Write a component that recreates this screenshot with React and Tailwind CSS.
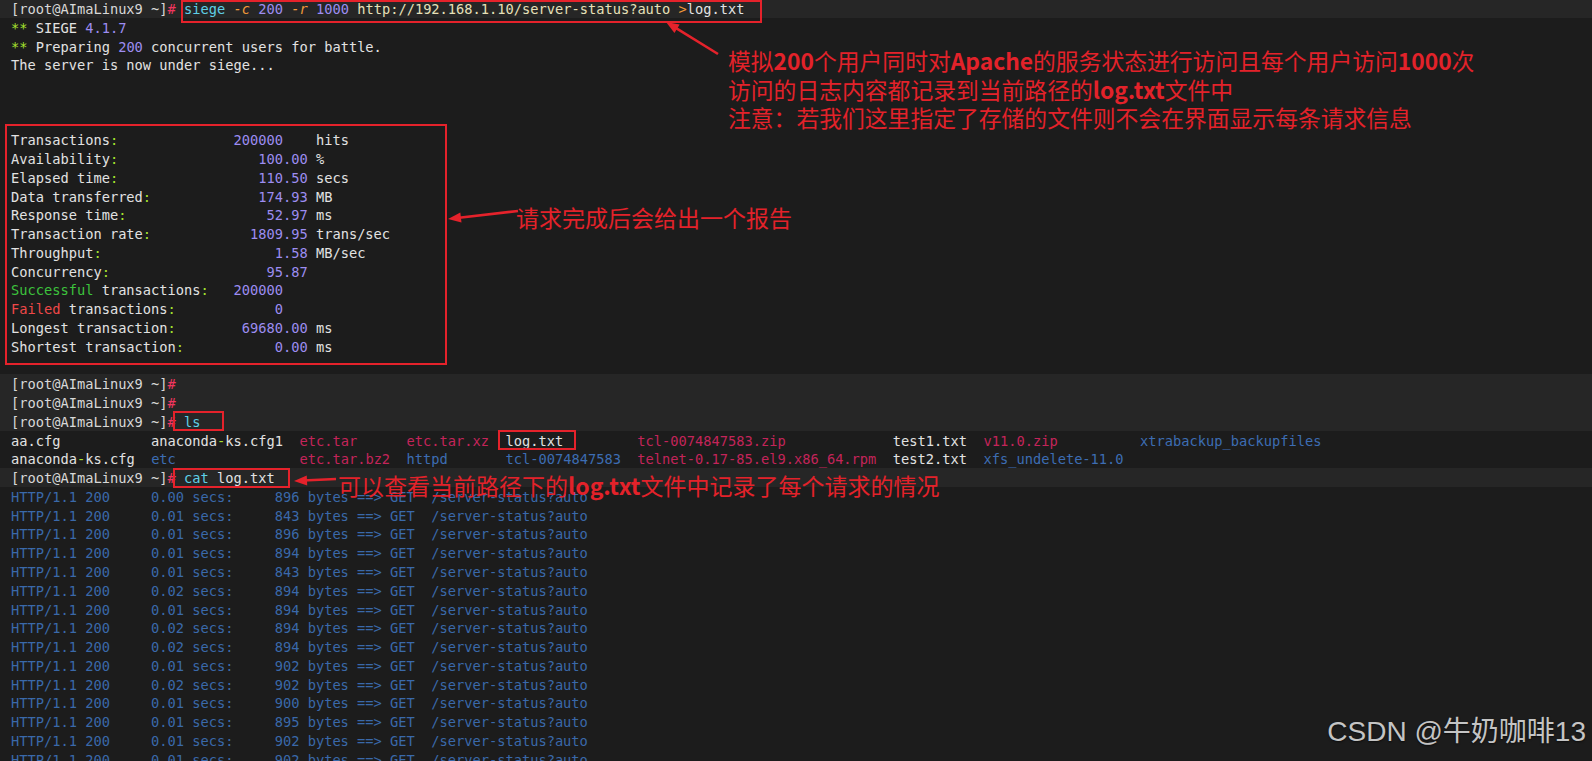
import clsx from 'clsx'

const W = 'text-[#e2e2e2]'
const GRN = 'text-[#a6e22e]'
const PUR = 'text-[#9d8df1]'
const CYN = 'text-[#5fcfe6]'
const ORG = 'text-[#f29a3a] italic'
const STR = 'text-[#e6e0b8]'
const PNK = 'text-[#f0365f]'
const ARC = 'text-[#c4245a]'
const BLU = 'text-[#3d6db3]'
const LOG = 'text-[#3a69aa]'
const OK = 'text-[#3cc23c]'
const BAD = 'text-[#ee4848]'

const s = (text, cls = W) => ({ text, cls })
const prompt = [s('[root@AImaLinux9 ~]', 'text-[#d8d8d8]'), s('#', PNK)]

function stat(parts, value, col, unit, gap = ' ') {
  const len = parts.reduce((n, p) => n + p.text.length, 0) + 1
  const segs = [...parts, s(':', GRN), s(' '.repeat(col - len)), s(value, PUR)]
  if (unit) segs.push(s(gap + unit))
  return segs
}

const lsWidths = [17, 18, 13, 12, 16, 31, 11, 19]
function lsRow(cells) {
  return cells.flatMap((cell, i) => {
    const len = cell.reduce((n, p) => n + p.text.length, 0)
    return i < cells.length - 1 ? [...cell, s(' '.repeat(lsWidths[i] - len))] : cell
  })
}

const hits = [
  ['0.00', '896'], ['0.01', '843'], ['0.01', '896'], ['0.01', '894'], ['0.01', '843'],
  ['0.02', '894'], ['0.01', '894'], ['0.02', '894'], ['0.02', '894'], ['0.01', '902'],
  ['0.02', '902'], ['0.01', '900'], ['0.01', '895'], ['0.01', '902'], ['0.01', '902'],
]

const lines = [
  {
    band: true,
    segs: [
      ...prompt, s(' '), s('siege', CYN), s(' '), s('-c', ORG), s(' '), s('200', PUR), s(' '),
      s('-r', ORG), s(' '), s('1000', PUR), s(' '), s('http://192.168.1.10/server-status?auto', STR),
      s(' '), s('>', 'text-[#f29a3a]'), s('log.txt'),
    ],
  },
  { segs: [s('**', GRN), s(' SIEGE '), s('4.1.7', PUR)] },
  { segs: [s('**', GRN), s(' Preparing '), s('200', PUR), s(' concurrent users for battle.')] },
  { segs: [s('The server is now under siege...')] },
  { segs: [] },
  { segs: [] },
  { segs: [] },
  { segs: stat([s('Transactions')], '200000', 27, 'hits', '    ') },
  { segs: stat([s('Availability')], '100.00', 30, '%') },
  { segs: stat([s('Elapsed time')], '110.50', 30, 'secs') },
  { segs: stat([s('Data transferred')], '174.93', 30, 'MB') },
  { segs: stat([s('Response time')], '52.97', 31, 'ms') },
  { segs: stat([s('Transaction rate')], '1809.95', 29, 'trans/sec') },
  { segs: stat([s('Throughput')], '1.58', 32, 'MB/sec') },
  { segs: stat([s('Concurrency')], '95.87', 31) },
  { segs: stat([s('Successful', OK), s(' transactions')], '200000', 27) },
  { segs: stat([s('Failed', BAD), s(' transactions')], '0', 32) },
  { segs: stat([s('Longest transaction')], '69680.00', 28, 'ms') },
  { segs: stat([s('Shortest transaction')], '0.00', 32, 'ms') },
  { segs: [] },
  { band: true, segs: prompt },
  { band: true, segs: prompt },
  { band: true, segs: [...prompt, s(' '), s('ls', CYN)] },
  {
    segs: lsRow([
      [s('aa.cfg')],
      [s('anaconda'), s('-', GRN), s('ks.cfg1')],
      [s('etc.tar', ARC)],
      [s('etc.tar.xz', ARC)],
      [s('log.txt')],
      [s('tcl-0074847583.zip', ARC)],
      [s('test1.txt')],
      [s('v11.0.zip', ARC)],
      [s('xtrabackup_backupfiles', BLU)],
    ]),
  },
  {
    segs: lsRow([
      [s('anaconda'), s('-', GRN), s('ks.cfg')],
      [s('etc', BLU)],
      [s('etc.tar.bz2', ARC)],
      [s('httpd', BLU)],
      [s('tcl-0074847583', BLU)],
      [s('telnet-0.17-85.el9.x86_64.rpm', ARC)],
      [s('test2.txt')],
      [s('xfs_undelete-11.0', BLU)],
    ]),
  },
  { band: true, segs: [...prompt, s(' '), s('cat', CYN), s(' log.txt')] },
  ...hits.map(([t, b]) => ({
    segs: [s(`HTTP/1.1 200     ${t} secs:     ${b} bytes ==> GET  /server-status?auto`, LOG)],
  })),
]

function Box({ className }) {
  return <div className={clsx('pointer-events-none absolute border-2 border-[#e5222b]', className)} />
}

function Arrow({ from, to }) {
  const dx = to[0] - from[0]
  const dy = to[1] - from[1]
  const len = Math.hypot(dx, dy)
  const ux = dx / len
  const uy = dy / len
  const bx = to[0] - ux * 13
  const by = to[1] - uy * 13
  const px = -uy * 5
  const py = ux * 5
  const head = `${to[0]},${to[1]} ${bx + px},${by + py} ${bx - px},${by - py}`
  return (
    <g>
      <line x1={from[0]} y1={from[1]} x2={bx + ux * 4} y2={by + uy * 4} stroke="#e5222b" strokeWidth="2.6" />
      <polygon points={head} fill="#e5222b" />
    </g>
  )
}

export default function App() {
  return (
    <div className="relative h-[761px] w-[1592px] overflow-hidden bg-[#1c1c1c] font-['DejaVu_Sans_Mono',monospace] text-[13.7px]">
      <div className="mt-[-1px] flex flex-col">
        {lines.map((line, i) => (
          <div
            key={i}
            className={clsx(
              'h-[18.78px] shrink-0 whitespace-pre pl-[11px] pt-[1px] leading-[18.78px]',
              line.band && 'bg-[#262626]',
            )}
          >
            {line.segs.map((seg, j) => (
              <span key={j} className={seg.cls}>
                {seg.text}
              </span>
            ))}
          </div>
        ))}
      </div>

      <Box className="left-[181px] top-[0px] h-[23px] w-[581px]" />
      <Box className="left-[5px] top-[124px] h-[241px] w-[442px]" />
      <Box className="left-[173px] top-[411px] h-[20px] w-[51px]" />
      <Box className="left-[498px] top-[430px] h-[20px] w-[78px]" />
      <Box className="left-[173px] top-[468px] h-[20px] w-[117px]" />

      <svg className="pointer-events-none absolute inset-0" width="1592" height="761">
        <Arrow from={[718, 54]} to={[666, 22]} />
        <Arrow from={[518, 211]} to={[448, 219]} />
        <Arrow from={[336, 479]} to={[294, 481]} />
      </svg>

      <div className="absolute left-[728px] top-[47px] font-['Noto_Sans_CJK_SC',sans-serif] text-[22.8px] leading-[28.5px] text-[#e3222a]">
        <div>
          模拟<b>200</b>个用户同时对<b>Apache</b>的服务状态进行访问且每个用户访问<b>1000</b>次
        </div>
        <div>
          访问的日志内容都记录到当前路径的<b>log.txt</b>文件中
        </div>
        <div>注意：若我们这里指定了存储的文件则不会在界面显示每条请求信息</div>
      </div>

      <div className="absolute left-[516px] top-[203px] font-['Noto_Sans_CJK_SC',sans-serif] text-[23px] leading-[28px] text-[#e3222a]">
        请求完成后会给出一个报告
      </div>

      <div className="absolute left-[338px] top-[471px] font-['Noto_Sans_CJK_SC',sans-serif] text-[23px] leading-[28px] text-[#e3222a]">
        可以查看当前路径下的<b>log.txt</b>文件中记录了每个请求的情况
      </div>

      <div className="absolute right-[6px] top-[715px] font-['Liberation_Sans','Noto_Sans_CJK_SC',sans-serif] text-[28px] leading-[34px] text-[#c4c4c4] [text-shadow:0_1px_2px_rgba(0,0,0,0.6)]">
        CSDN @牛奶咖啡13
      </div>
    </div>
  )
}
